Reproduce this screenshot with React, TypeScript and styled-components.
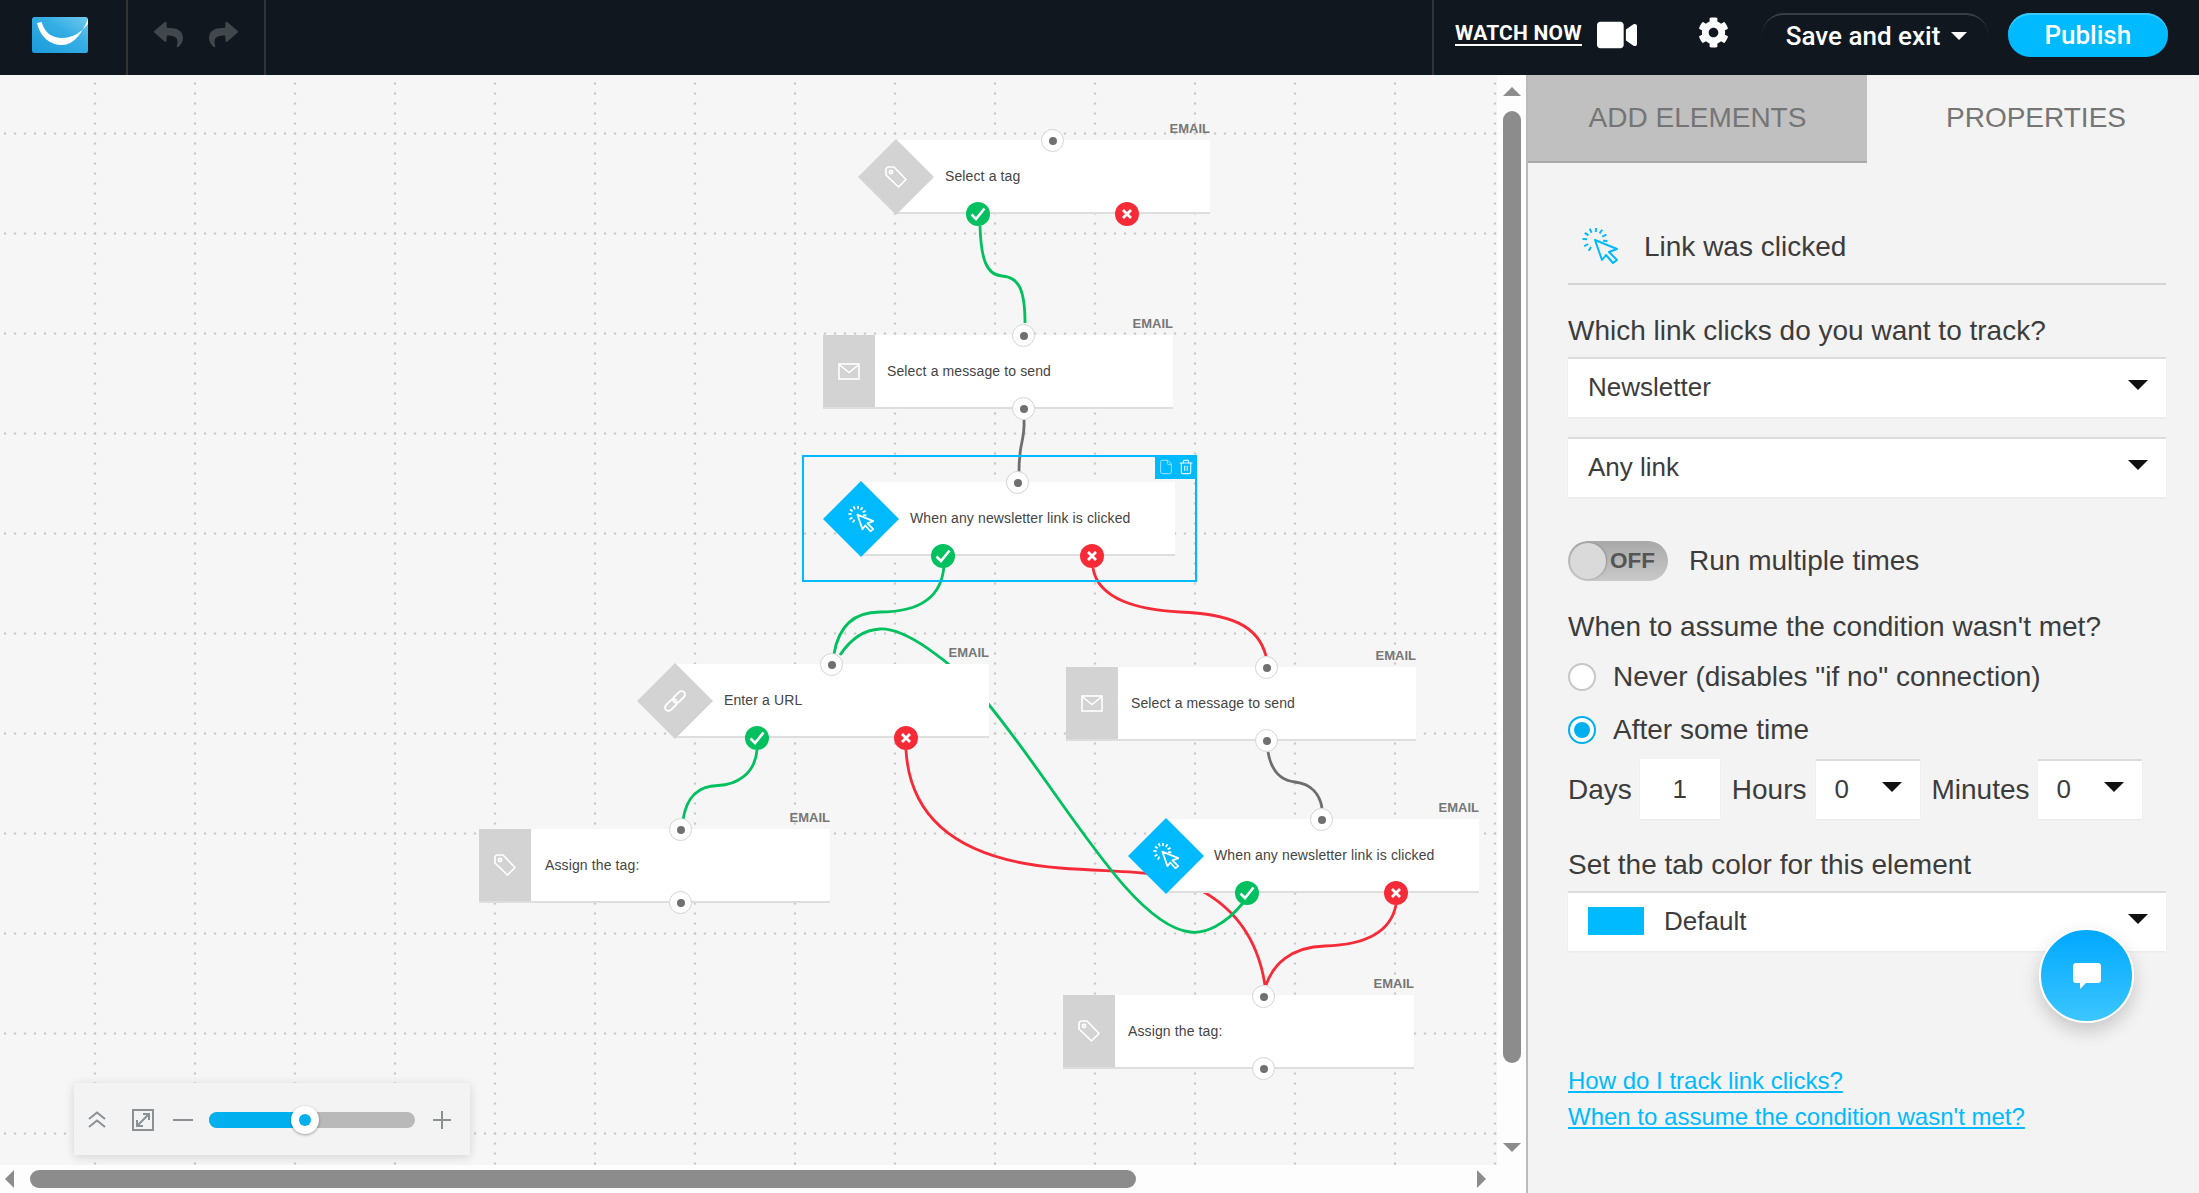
import styled, { createGlobalStyle } from 'styled-components'
import { FaCog, FaReply, FaShare, FaVideo } from 'react-icons/fa'
import { File, Trash2 } from 'lucide-react'

const GlobalStyle = createGlobalStyle`
  html, body {
    margin: 0;
    height: 100%;
    overflow: hidden;
    background: #f6f6f6;
  }
  * {
    box-sizing: border-box;
  }
`

const Page = styled.div`
  width: 2199px;
  height: 1193px;
  display: flex;
  flex-direction: column;
  font-family: 'Liberation Sans', Arial, sans-serif;
`

/* top bar */
const Header = styled.header`
  height: 75px;
  flex: none;
  display: flex;
  align-items: center;
  background: #10171f;
  font-family: Roboto, sans-serif;
  color: #fff;
`

const LogoCell = styled.div`
  width: 128px;
  height: 100%;
  display: flex;
  align-items: center;
  padding: 0 0 5px 32px;
  border-right: 2px solid #333;
`

const HistoryCell = styled.div`
  width: 138px;
  height: 100%;
  display: flex;
  align-items: center;
  justify-content: center;
  gap: 26px;
  padding-bottom: 6px;
  color: #41474a;
  font-size: 29px;
  border-right: 2px solid #333;
`

const HeaderRight = styled.div`
  margin-left: auto;
  width: 767px;
  height: 100%;
  display: flex;
  align-items: center;
  padding-left: 21px;
  border-left: 2px solid #333;
`

const WatchNow = styled.a`
  font-size: 21px;
  font-weight: 700;
  line-height: 22px;
  letter-spacing: 0.2px;
  border-bottom: 2px solid #fff;
  margin-top: -8px;
`

const Camera = styled(FaVideo)`
  font-size: 40px;
  margin: -6px 0 0 15px;
`

const Gear = styled(FaCog)`
  font-size: 31px;
  margin: -11px 0 0 61px;
`

const SaveButton = styled.div`
  width: 226px;
  height: 44px;
  margin: -5px 0 0 33px;
  display: flex;
  align-items: center;
  padding: 0 21px 0 24px;
  justify-content: space-between;
  font-size: 26px;
  font-weight: 500;
  border-top: 2px solid #3a3f45;
  border-radius: 24px;
`

const SaveCaret = styled.span`
  width: 0;
  height: 0;
  border-left: 8px solid transparent;
  border-right: 8px solid transparent;
  border-top: 8px solid #fff;
`

const PublishButton = styled.div`
  width: 160px;
  height: 44px;
  margin: -5px 0 0 20px;
  display: flex;
  align-items: center;
  justify-content: center;
  background: #00baff;
  border-radius: 22px;
  box-shadow: inset 0 2px 0 #35c8ff;
  font-size: 26px;
  font-weight: 500;
`

/* workspace */
const Main = styled.div`
  flex: 1;
  display: flex;
  min-height: 0;
`

const Workspace = styled.div`
  width: 1526px;
  flex: none;
  display: flex;
  flex-direction: column;
  background: #fdfdfd;
`

const WorkRow = styled.div`
  height: 1090px;
  display: flex;
`

const Canvas = styled.div`
  position: relative;
  width: 1497px;
  height: 100%;
  background: #f6f6f6;
  overflow: hidden;
`

const WireLayer = styled.svg`
  position: absolute;
  inset: 0;
  width: 100%;
  height: 100%;
`

const Node = styled.div<{ $x: number; $y: number; $w: number }>`
  position: absolute;
  left: ${(p) => p.$x}px;
  top: ${(p) => p.$y - 75}px;
  width: ${(p) => p.$w}px;
  height: 74px;
  display: flex;
  align-items: center;
`

const Card = styled.div`
  flex: 1;
  height: 100%;
  display: flex;
  align-items: center;
  background: #fff;
  border-bottom: 2px solid #dedede;
  font-size: 14px;
  letter-spacing: 0.12px;
  color: #444;
`

const Label = styled.span<{ $pad: number }>`
  padding-left: ${(p) => p.$pad}px;
  white-space: nowrap;
`

const IconBlock = styled.div`
  width: 52px;
  height: 100%;
  flex: none;
  display: flex;
  align-items: center;
  justify-content: center;
  background: #d3d3d3;
  border-bottom: 2px solid #dedede;
`

const Diamond = styled.div<{ $active?: boolean }>`
  width: 76px;
  height: 76px;
  flex: none;
  margin-right: -38px;
  z-index: 1;
  display: flex;
  align-items: center;
  justify-content: center;
  background: ${(p) => (p.$active ? '#00baff' : '#d3d3d3')};
  clip-path: polygon(50% 0, 100% 50%, 50% 100%, 0 50%);
`

const EmailTag = styled.span`
  position: absolute;
  right: 0;
  top: -19px;
  font-size: 13px;
  font-weight: 700;
  line-height: 16px;
  color: #777;
`

const Port = styled.span<{ $x: number; $y: number }>`
  position: absolute;
  left: ${(p) => p.$x - 12}px;
  top: ${(p) => p.$y - 75 - 12}px;
  width: 23px;
  height: 23px;
  display: flex;
  align-items: center;
  justify-content: center;
  background: #fff;
  border: 1.5px solid #d4d4d4;
  border-radius: 50%;
  &::after {
    content: '';
    width: 8px;
    height: 8px;
    border-radius: 50%;
    background: #707070;
  }
`

const Badge = styled.span<{ $x: number; $y: number; $ok: boolean }>`
  position: absolute;
  left: ${(p) => p.$x - 12}px;
  top: ${(p) => p.$y - 75 - 12}px;
  width: 24px;
  height: 24px;
  display: flex;
  align-items: center;
  justify-content: center;
  border-radius: 50%;
  background: ${(p) => (p.$ok ? '#00c05f' : '#f72b38')};
`

const Selection = styled.div`
  position: absolute;
  left: 802px;
  top: 380px;
  width: 395px;
  height: 127px;
  border: 2px solid #00baff;
  pointer-events: none;
`

const SelectionTools = styled.div`
  position: absolute;
  right: -2px;
  top: -2px;
  width: 42px;
  height: 24px;
  display: flex;
  align-items: center;
  justify-content: center;
  gap: 4px;
  background: #00baff;
`

const ZoomBar = styled.div`
  position: absolute;
  left: 74px;
  top: 1008px;
  width: 396px;
  height: 72px;
  display: flex;
  align-items: center;
  padding: 2px 0 0 13px;
  background: #f3f3f3;
  box-shadow: 0 2px 10px rgba(0, 0, 0, 0.14);
  color: #8b9095;
`

const ZoomTrack = styled.div`
  position: relative;
  width: 206px;
  height: 16px;
  margin-left: 16px;
  border-radius: 8px;
  background: #b9b9b9;
  overflow: visible;
`

const ZoomFill = styled.div`
  width: 100px;
  height: 100%;
  border-radius: 8px 0 0 8px;
  background: #00b0ee;
`

const ZoomKnob = styled.span`
  position: absolute;
  left: 82px;
  top: -6px;
  width: 28px;
  height: 28px;
  display: flex;
  align-items: center;
  justify-content: center;
  background: #fff;
  border-radius: 50%;
  box-shadow: 0 1px 3px rgba(0, 0, 0, 0.35);
  &::after {
    content: '';
    width: 12px;
    height: 12px;
    border-radius: 50%;
    background: #00b0ee;
  }
`

const ZoomIcon = styled.svg<{ $gap: number }>`
  flex: none;
  margin-left: ${(p) => p.$gap}px;
`

/* scrollbars */
const VScroll = styled.div`
  width: 29px;
  display: flex;
  flex-direction: column;
  align-items: center;
  padding-top: 12px;
`

const ArrowUp = styled.span`
  width: 0;
  height: 0;
  border-left: 9px solid transparent;
  border-right: 9px solid transparent;
  border-bottom: 9px solid #8c8c8c;
`

const ArrowDown = styled(ArrowUp)`
  margin-top: 80px;
  border-bottom: none;
  border-top: 9px solid #8c8c8c;
`

const VThumb = styled.div`
  width: 18px;
  height: 952px;
  margin-top: 15px;
  border-radius: 9px;
  background: #8c8c8c;
`

const HScroll = styled.div`
  height: 28px;
  display: flex;
  align-items: center;
  padding: 0 40px 0 5px;
`

const ArrowLeft = styled.span`
  width: 0;
  height: 0;
  border-top: 9px solid transparent;
  border-bottom: 9px solid transparent;
  border-right: 9px solid #8c8c8c;
`

const ArrowRight = styled.span`
  width: 0;
  height: 0;
  margin-left: auto;
  border-top: 9px solid transparent;
  border-bottom: 9px solid transparent;
  border-left: 9px solid #8c8c8c;
`

const HThumb = styled.div`
  width: 1106px;
  height: 18px;
  margin-left: 16px;
  border-radius: 9px;
  background: #8c8c8c;
`

/* right panel */
const Panel = styled.aside`
  position: relative;
  flex: 1;
  background: #f3f3f3;
  border-left: 2px solid #bbb;
  color: #3c3c3c;
  font-size: 28px;
`

const Tabs = styled.div`
  height: 88px;
  display: flex;
`

const Tab = styled.div<{ $on?: boolean }>`
  width: ${(p) => (p.$on ? '339px' : '332px')};
  display: flex;
  align-items: center;
  justify-content: center;
  padding-left: ${(p) => (p.$on ? 0 : 6)}px;
  font-size: 28px;
  color: #757575;
  background: ${(p) => (p.$on ? '#c0c0c0' : 'transparent')};
  border-bottom: 2px solid ${(p) => (p.$on ? '#a9a9a9' : 'transparent')};
`

const PanelBody = styled.div`
  padding: 65px 33px 0 40px;
`

const PanelHead = styled.div`
  height: 57px;
  display: flex;
  align-items: flex-start;
  gap: 26px;
  padding-left: 14px;
  border-bottom: 2px solid #d3d3d3;
`

const HeadTitle = styled.span`
  line-height: 38px;
`

const Question = styled.div<{ $top: number }>`
  margin-top: ${(p) => p.$top}px;
  line-height: 32px;
`

const Select = styled.div<{ $top: number }>`
  height: 60px;
  margin-top: ${(p) => p.$top}px;
  display: flex;
  align-items: center;
  padding: 0 18px 2px 20px;
  background: #fff;
  font-size: 26px;
  border-top: 2px solid #dcdcdc;
  box-shadow: 0 1px 2px rgba(0, 0, 0, 0.05);
`

const Caret = styled.span`
  margin-left: auto;
  margin-top: -5px;
  width: 0;
  height: 0;
  border-left: 10px solid transparent;
  border-right: 10px solid transparent;
  border-top: 10px solid #111;
`

const Swatch = styled.span`
  width: 56px;
  height: 28px;
  margin-right: 20px;
  background: #00baff;
`

const ToggleRow = styled.div`
  margin-top: 44px;
  display: flex;
  align-items: center;
  gap: 21px;
`

const Toggle = styled.div`
  position: relative;
  width: 100px;
  height: 40px;
  display: flex;
  align-items: center;
  justify-content: flex-end;
  padding-right: 13px;
  border-radius: 20px;
  background: linear-gradient(to bottom, #a8a8a8, #c9c9c9);
  font-size: 22.5px;
  font-weight: 700;
  color: #555;
  &::before {
    content: '';
    position: absolute;
    left: 2px;
    top: 2px;
    width: 36px;
    height: 36px;
    border-radius: 50%;
    background: #dadada;
    box-shadow: 1px 0 2px rgba(0, 0, 0, 0.2);
  }
`

const RadioRow = styled.div<{ $top: number }>`
  margin-top: ${(p) => p.$top}px;
  height: 32px;
  display: flex;
  align-items: center;
  gap: 17px;
`

const Radio = styled.span<{ $on?: boolean }>`
  width: 28px;
  height: 28px;
  display: flex;
  align-items: center;
  justify-content: center;
  border-radius: 50%;
  background: #fff;
  border: 2px solid ${(p) => (p.$on ? '#00b0ee' : '#c7c7c7')};
  &::after {
    content: '';
    width: 16px;
    height: 16px;
    border-radius: 50%;
    background: ${(p) => (p.$on ? '#00b0ee' : 'transparent')};
  }
`

const DelayRow = styled.div`
  margin-top: 13px;
  display: flex;
  align-items: center;
  height: 60px;
`

const DelayBox = styled.div<{ $w: number; $left: number; $flat?: boolean }>`
  width: ${(p) => p.$w}px;
  height: 60px;
  margin-left: ${(p) => p.$left}px;
  display: flex;
  align-items: center;
  justify-content: ${(p) => (p.$flat ? 'center' : 'flex-start')};
  padding: 0 ${(p) => (p.$flat ? 0 : 18)}px ${(p) => (p.$flat ? 0 : 2)}px ${(p) => (p.$flat ? 0 : 19)}px;
  background: #fff;
  font-size: 26px;
  border-top: ${(p) => (p.$flat ? 'none' : '2px solid #dcdcdc')};
  box-shadow: 0 1px 2px rgba(0, 0, 0, 0.05);
`

const DelayLabel = styled.span<{ $left?: number }>`
  margin-left: ${(p) => p.$left ?? 0}px;
  padding-top: 1px;
`

const HelpLinks = styled.div`
  margin-top: 112px;
  display: flex;
  flex-direction: column;
  align-items: flex-start;
  line-height: 36px;
`

const HelpLink = styled.a`
  color: #00baff;
  text-decoration: underline;
  font-size: 24px;
`

const ChatButton = styled.div`
  position: absolute;
  left: 511px;
  top: 853px;
  width: 95px;
  height: 95px;
  display: flex;
  align-items: center;
  justify-content: center;
  border: 2px solid #fff;
  border-radius: 50%;
  background: linear-gradient(to bottom, #00a8ff, #3cc6ff);
  box-shadow: 0 8px 18px rgba(0, 0, 0, 0.18);
`

/* drawings */
const Logo = () => (
  <svg width="56" height="36" viewBox="0 0 56 36">
    <defs>
      <linearGradient id="logoBg" x1="0" y1="1" x2="1" y2="0">
        <stop offset="0" stopColor="#1a9bdb" />
        <stop offset="0.6" stopColor="#36aee4" />
        <stop offset="1" stopColor="#72c9ef" />
      </linearGradient>
    </defs>
    <rect width="56" height="36" rx="2.5" fill="url(#logoBg)" />
    <path d="M5 6C8 20 18 28 30 28C42 28 50 16 56 2V7C50 14 42 21 30 21C20 21 13 16 9.5 5Z" fill="#fff" />
  </svg>
)

const TICK_ANGLES = [-175, -145, -115, -85, -55, -25, 5, 150, 120]

const ClickIcon = ({ size, color, width }: { size: number; color: string; width: number }) => (
  <svg width={size} height={size} viewBox="0 0 36 36" fill="none" stroke={color} strokeWidth={width}>
    {TICK_ANGLES.map((a) => {
      const r = (a * Math.PI) / 180
      return (
        <line
          key={a}
          x1={13 + 8 * Math.cos(r)}
          y1={12 + 8 * Math.sin(r)}
          x2={13 + 12.5 * Math.cos(r)}
          y2={12 + 12.5 * Math.sin(r)}
        />
      )
    })}
    <path d="M13 12L35 21L27 24L35 32L31 35L24 27L20 32Z" strokeLinejoin="round" />
  </svg>
)

const TagIcon = () => (
  <svg width="24" height="24" viewBox="0 0 24 24" fill="none" stroke="#fff" strokeWidth="1.7">
    <path d="M2 4.5A2.5 2.5 0 0 1 4.5 2H10L22 14.5L14.5 22L2 10Z" strokeLinejoin="round" />
    <circle cx="7" cy="7" r="1.6" />
  </svg>
)

const MailIcon = () => (
  <svg width="22" height="17" viewBox="0 0 22 17" fill="none" stroke="#fff" strokeWidth="1.6">
    <rect x="1" y="1" width="20" height="15" />
    <path d="M1 1.5L11 9.5L21 1.5" />
  </svg>
)

const ChainIcon = () => (
  <svg width="26" height="26" viewBox="0 0 26 26" fill="none" stroke="#fff" strokeWidth="1.8">
    <rect x="2" y="13.5" width="14" height="7" rx="3.5" transform="rotate(-45 9 17)" />
    <rect x="10" y="5.5" width="14" height="7" rx="3.5" transform="rotate(-45 17 9)" />
  </svg>
)

const CheckMark = () => (
  <svg width="16" height="14" viewBox="0 0 16 14" fill="none" stroke="#fff" strokeWidth="2.6">
    <path d="M1.5 7.5L6 12L14.5 1.5" />
  </svg>
)

const CrossMark = () => (
  <svg width="10" height="10" viewBox="0 0 10 10" fill="none" stroke="#fff" strokeWidth="2.8">
    <path d="M1 1L9 9M9 1L1 9" />
  </svg>
)

const ChatIcon = () => (
  <svg width="28" height="26" viewBox="0 0 28 26" fill="#fff">
    <path d="M3 0H25A3 3 0 0 1 28 3V17A3 3 0 0 1 25 20H13L7 26V20H3A3 3 0 0 1 0 17V3A3 3 0 0 1 3 0Z" />
  </svg>
)

const GREEN = '#00c05f'
const RED = '#f72b38'
const GREY = '#6e6e6e'

const wires = [
  { c: GREY, d: 'M1268 752C1272 775 1285 781 1295 782C1312 784 1320 795 1322 808' },
  { c: GREY, d: 'M1024 420C1025 436 1020 446 1020 455C1019 462 1019 466 1019 472' },
  { c: GREEN, d: 'M980 226C981 258 986 275 1002 276C1018 277 1025 288 1025 323' },
  { c: GREEN, d: 'M944 565C942 600 915 612 880 612C850 612 838 630 834 654' },
  { c: GREEN, d: 'M757 750C755 775 735 785 718 785.5C695 786 686 800 683 820' },
  { c: RED, d: 'M1093 568C1098 600 1140 610 1180 612C1230 614 1258 625 1266 656' },
  { c: RED, d: 'M906 750C910 820 960 860 1060 868C1130 873 1160 870 1190 885C1235 905 1258 940 1265 985' },
  { c: RED, d: 'M1396 905C1390 935 1360 945 1325 946C1290 947 1273 965 1266 985' },
  { c: GREEN, d: 'M1243 903C1225 925 1205 934 1190 932C1130 925 1060 790 985 700C950 660 905 628 880 629C860 630 848 643 840 655' },
]

const nodes = [
  { x: 858, y: 140, w: 352, text: 'Select a tag', pad: 49, icon: 'tag', kind: 'diamond' },
  { x: 823, y: 335, w: 350, text: 'Select a message to send', pad: 12, icon: 'mail', kind: 'block' },
  { x: 823, y: 482, w: 352, text: 'When any newsletter link is clicked', pad: 49, icon: 'click', kind: 'active' },
  { x: 637, y: 664, w: 352, text: 'Enter a URL', pad: 49, icon: 'chain', kind: 'diamond' },
  { x: 479, y: 829, w: 351, text: 'Assign the tag:', pad: 14, icon: 'tag', kind: 'block' },
  { x: 1066, y: 667, w: 350, text: 'Select a message to send', pad: 13, icon: 'mail', kind: 'block' },
  { x: 1128, y: 819, w: 351, text: 'When any newsletter link is clicked', pad: 48, icon: 'click', kind: 'active' },
  { x: 1063, y: 995, w: 351, text: 'Assign the tag:', pad: 13, icon: 'tag', kind: 'block' },
]

const ports = [
  [1053, 141], [1024, 336], [1024, 409], [1018, 483], [832, 665], [681, 830], [681, 903],
  [1267, 668], [1267, 741], [1322, 820], [1264, 997], [1264, 1069],
]

const badges = [
  { x: 978, y: 214, ok: true }, { x: 1127, y: 214, ok: false },
  { x: 943, y: 556, ok: true }, { x: 1092, y: 556, ok: false },
  { x: 757, y: 738, ok: true }, { x: 906, y: 738, ok: false },
  { x: 1247, y: 893, ok: true }, { x: 1396, y: 893, ok: false },
]

const dotsAcross = Array.from({ length: 10 }, (_, i) => 5 + i * 10)
const dotsDown = Array.from({ length: 10 }, (_, i) => 3.5 + i * 10)

const nodeIcon = (icon: string) => {
  if (icon === 'tag') return <TagIcon />
  if (icon === 'mail') return <MailIcon />
  if (icon === 'chain') return <ChainIcon />
  return <ClickIcon size={26} color="#fff" width={2.4} />
}

const App = () => {
  return (
    <Page>
      <GlobalStyle />
      <Header>
        <LogoCell>
          <Logo />
        </LogoCell>
        <HistoryCell>
          <FaReply />
          <FaShare />
        </HistoryCell>
        <HeaderRight>
          <WatchNow>WATCH NOW</WatchNow>
          <Camera />
          <Gear />
          <SaveButton>
            Save and exit
            <SaveCaret />
          </SaveButton>
          <PublishButton>Publish</PublishButton>
        </HeaderRight>
      </Header>
      <Main>
        <Workspace>
          <WorkRow>
            <Canvas>
              <WireLayer viewBox="0 75 1497 1090">
                <defs>
                  <pattern id="grid" width="100" height="100" patternUnits="userSpaceOnUse">
                    {dotsAcross.map((x) => (
                      <circle key={x} cx={x} cy={33.5} r="1.3" fill="#cbcbcb" />
                    ))}
                    {dotsDown.map((y) => (
                      <circle key={y} cx={95} cy={y} r="1.3" fill="#cbcbcb" />
                    ))}
                  </pattern>
                </defs>
                <rect x="0" y="75" width="1497" height="1090" fill="url(#grid)" />
                {wires.map((w) => (
                  <path key={w.d} d={w.d} fill="none" stroke={w.c} strokeWidth="2.8" />
                ))}
              </WireLayer>
              {nodes.map((n) => (
                <Node key={n.x} $x={n.x} $y={n.y} $w={n.w}>
                  {n.kind === 'block' ? (
                    <IconBlock>{nodeIcon(n.icon)}</IconBlock>
                  ) : (
                    <Diamond $active={n.kind === 'active'}>{nodeIcon(n.icon)}</Diamond>
                  )}
                  <Card>
                    <Label $pad={n.pad}>{n.text}</Label>
                  </Card>
                  {n.kind !== 'active' || n.x !== 823 ? <EmailTag>EMAIL</EmailTag> : null}
                </Node>
              ))}
              <Selection>
                <SelectionTools>
                  <File size={16} color="#9fe3ff" strokeWidth={1.5} />
                  <Trash2 size={16} color="#d9f5ff" strokeWidth={1.8} />
                </SelectionTools>
              </Selection>
              {ports.map(([x, y]) => (
                <Port key={`${x}-${y}`} $x={x} $y={y} />
              ))}
              {badges.map((b) => (
                <Badge key={b.x} $x={b.x} $y={b.y} $ok={b.ok}>
                  {b.ok ? <CheckMark /> : <CrossMark />}
                </Badge>
              ))}
              <ZoomBar>
                <ZoomIcon $gap={0} width="20" height="18" viewBox="0 0 20 18" fill="none" stroke="currentColor" strokeWidth="2">
                  <path d="M2 8L10 1.5L18 8M2 16L10 9.5L18 16" />
                </ZoomIcon>
                <ZoomIcon $gap={25} width="22" height="22" viewBox="0 0 22 22" fill="none" stroke="currentColor" strokeWidth="2">
                  <rect x="1" y="1" width="20" height="20" />
                  <path d="M5 17L17 5M11 5H17V11M5 11V17H11" />
                </ZoomIcon>
                <ZoomIcon $gap={19} width="20" height="2" viewBox="0 0 20 2" fill="none" stroke="currentColor" strokeWidth="2">
                  <path d="M0 1H20" />
                </ZoomIcon>
                <ZoomTrack>
                  <ZoomFill />
                  <ZoomKnob />
                </ZoomTrack>
                <ZoomIcon $gap={18} width="18" height="18" viewBox="0 0 18 18" fill="none" stroke="currentColor" strokeWidth="2">
                  <path d="M0 9H18M9 0V18" />
                </ZoomIcon>
              </ZoomBar>
            </Canvas>
            <VScroll>
              <ArrowUp />
              <VThumb />
              <ArrowDown />
            </VScroll>
          </WorkRow>
          <HScroll>
            <ArrowLeft />
            <HThumb />
            <ArrowRight />
          </HScroll>
        </Workspace>
        <Panel>
          <Tabs>
            <Tab $on>ADD ELEMENTS</Tab>
            <Tab>PROPERTIES</Tab>
          </Tabs>
          <PanelBody>
            <PanelHead>
              <ClickIcon size={36} color="#00baff" width={2} />
              <HeadTitle>Link was clicked</HeadTitle>
            </PanelHead>
            <Question $top={30}>Which link clicks do you want to track?</Question>
            <Select $top={10}>
              Newsletter
              <Caret />
            </Select>
            <Select $top={20}>
              Any link
              <Caret />
            </Select>
            <ToggleRow>
              <Toggle>OFF</Toggle>
              Run multiple times
            </ToggleRow>
            <Question $top={30}>When to assume the condition wasn't met?</Question>
            <RadioRow $top={18}>
              <Radio />
              Never (disables "if no" connection)
            </RadioRow>
            <RadioRow $top={21}>
              <Radio $on />
              After some time
            </RadioRow>
            <DelayRow>
              <DelayLabel>Days</DelayLabel>
              <DelayBox $w={80} $left={8} $flat>
                1
              </DelayBox>
              <DelayLabel $left={12}>Hours</DelayLabel>
              <DelayBox $w={104} $left={9}>
                0
                <Caret />
              </DelayBox>
              <DelayLabel $left={12}>Minutes</DelayLabel>
              <DelayBox $w={104} $left={8}>
                0
                <Caret />
              </DelayBox>
            </DelayRow>
            <Question $top={30}>Set the tab color for this element</Question>
            <Select $top={10}>
              <Swatch />
              Default
              <Caret />
            </Select>
            <HelpLinks>
              <HelpLink>How do I track link clicks?</HelpLink>
              <HelpLink>When to assume the condition wasn't met?</HelpLink>
            </HelpLinks>
          </PanelBody>
          <ChatButton>
            <ChatIcon />
          </ChatButton>
        </Panel>
      </Main>
    </Page>
  )
}

export default App
